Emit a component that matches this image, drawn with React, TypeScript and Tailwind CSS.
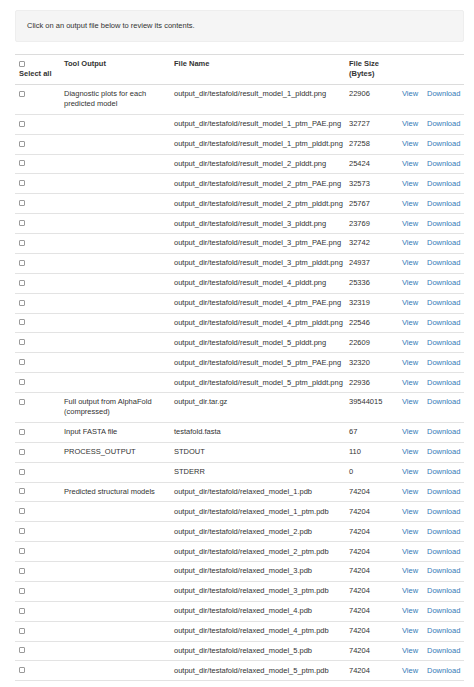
import React from "react";

interface OutputRow {
  tool?: string;
  file: string;
  size: string;
}

const rows: OutputRow[] = [
  { tool: "Diagnostic plots for each predicted model", file: "output_dir/testafold/result_model_1_plddt.png", size: "22906" },
  { file: "output_dir/testafold/result_model_1_ptm_PAE.png", size: "32727" },
  { file: "output_dir/testafold/result_model_1_ptm_plddt.png", size: "27258" },
  { file: "output_dir/testafold/result_model_2_plddt.png", size: "25424" },
  { file: "output_dir/testafold/result_model_2_ptm_PAE.png", size: "32573" },
  { file: "output_dir/testafold/result_model_2_ptm_plddt.png", size: "25767" },
  { file: "output_dir/testafold/result_model_3_plddt.png", size: "23769" },
  { file: "output_dir/testafold/result_model_3_ptm_PAE.png", size: "32742" },
  { file: "output_dir/testafold/result_model_3_ptm_plddt.png", size: "24937" },
  { file: "output_dir/testafold/result_model_4_plddt.png", size: "25336" },
  { file: "output_dir/testafold/result_model_4_ptm_PAE.png", size: "32319" },
  { file: "output_dir/testafold/result_model_4_ptm_plddt.png", size: "22546" },
  { file: "output_dir/testafold/result_model_5_plddt.png", size: "22609" },
  { file: "output_dir/testafold/result_model_5_ptm_PAE.png", size: "32320" },
  { file: "output_dir/testafold/result_model_5_ptm_plddt.png", size: "22936" },
  { tool: "Full output from AlphaFold (compressed)", file: "output_dir.tar.gz", size: "39544015" },
  { tool: "Input FASTA file", file: "testafold.fasta", size: "67" },
  { tool: "PROCESS_OUTPUT", file: "STDOUT", size: "110" },
  { file: "STDERR", size: "0" },
  { tool: "Predicted structural models", file: "output_dir/testafold/relaxed_model_1.pdb", size: "74204" },
  { file: "output_dir/testafold/relaxed_model_1_ptm.pdb", size: "74204" },
  { file: "output_dir/testafold/relaxed_model_2.pdb", size: "74204" },
  { file: "output_dir/testafold/relaxed_model_2_ptm.pdb", size: "74204" },
  { file: "output_dir/testafold/relaxed_model_3.pdb", size: "74204" },
  { file: "output_dir/testafold/relaxed_model_3_ptm.pdb", size: "74204" },
  { file: "output_dir/testafold/relaxed_model_4.pdb", size: "74204" },
  { file: "output_dir/testafold/relaxed_model_4_ptm.pdb", size: "74204" },
  { file: "output_dir/testafold/relaxed_model_5.pdb", size: "74204" },
  { file: "output_dir/testafold/relaxed_model_5_ptm.pdb", size: "74204" },
];

// Small square checkbox
const Box = () => (
  <span className="inline-block w-[6px] h-[6px] border border-[#9a9a9a] rounded-[1px] bg-white align-[-0.5px]" />
);

const App: React.FC = () => {
  return (
    <div className="min-h-screen bg-white pt-[10px] pl-[15px] pr-[10px] text-[7.5px] leading-[10px] text-[#333] font-['Liberation_Sans',Arial,sans-serif]">
      {/* Info box */}
      <div className="h-[32px] flex items-center px-[11px] bg-[#f5f5f5] border border-[#eeeeee] rounded-[2px]">
        Click on an output file below to review its contents.
      </div>

      {/* Table */}
      <table className="w-full table-fixed border-collapse mt-[11.5px]">
        <colgroup>
          <col className="w-[45px]" />
          <col className="w-[110px]" />
          <col className="w-[175px]" />
          <col className="w-[53px]" />
          <col className="w-[25px]" />
          <col className="w-[41px]" />
        </colgroup>
        <thead>
          <tr className="text-left font-bold border-t border-b border-[#dcdcdc]">
            <th className="px-[4px] py-[4.7px] align-top">
              <Box />
              <br />
              Select all
            </th>
            <th className="px-[4px] py-[4.7px] align-top">Tool Output</th>
            <th className="px-[4px] py-[4.7px] align-top">File Name</th>
            <th className="px-[4px] py-[4.7px] align-top">File Size (Bytes)</th>
            <th className="px-[4px] py-[4.7px]" />
            <th className="px-[4px] py-[4.7px]" />
          </tr>
        </thead>
        <tbody>
          {rows.map((row, i) => (
            <tr key={i} className="border-b border-[#e3e3e3]">
              <td className="px-[4px] py-[4.45px] align-top">
                <Box />
              </td>
              <td className="px-[4px] py-[4.45px] align-top">{row.tool}</td>
              <td className="px-[4px] py-[4.45px] align-top whitespace-nowrap">{row.file}</td>
              <td className="px-[4px] py-[4.45px] align-top">{row.size}</td>
              <td className="px-[4px] py-[4.45px] align-top text-[#337ab7]">View</td>
              <td className="px-[4px] py-[4.45px] align-top text-[#337ab7]">Download</td>
            </tr>
          ))}
        </tbody>
      </table>
    </div>
  );
};

export default App;
